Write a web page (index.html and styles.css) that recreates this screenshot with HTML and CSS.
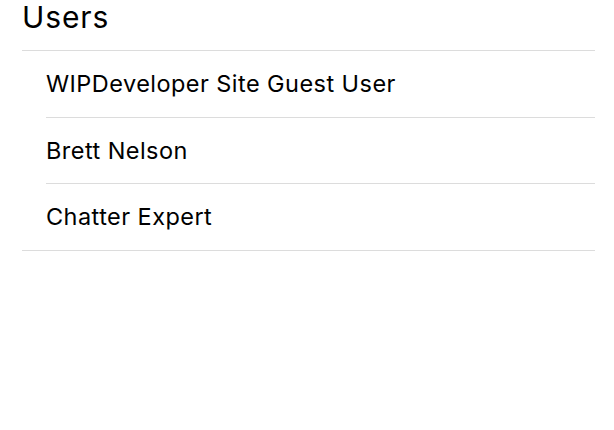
FILE: index.html
```html
<!DOCTYPE html>
<html lang="en">
<head>
<meta charset="utf-8">
<title>Users</title>
<link rel="stylesheet" href="styles.css">
</head>
<body>
<section class="users">
  <h1 class="users-title">Users</h1>
  <ul class="user-list">
    <li class="user-item"><span class="user-name">WIPDeveloper Site Guest User</span></li>
    <li class="user-item"><span class="user-name">Brett Nelson</span></li>
    <li class="user-item"><span class="user-name">Chatter Expert</span></li>
  </ul>
</section>
</body>
</html>
```
FILE: styles.css
```css
html, body {
  margin: 0;
  padding: 0;
  background: #ffffff;
}

body {
  font-family: Inter, "Noto Sans", "Liberation Sans", sans-serif;
  color: #000000;
}

.users {
  padding: 0 19px 0 22px;
}

.users-title {
  margin: 0;
  height: 50px;
  font-size: 30px;
  font-weight: 400;
  line-height: 34px;
  letter-spacing: 0.9px;
  border-bottom: 1px solid #dcdcdc;
  box-sizing: content-box;
}

.user-list {
  list-style: none;
  margin: 0;
  padding: 0;
  border-bottom: 1px solid #dcdcdc;
}

.user-item {
  margin-left: 24px;
}

.user-name {
  display: block;
  height: 65.6px;
  line-height: 65.6px;
  font-size: 23.5px;
  letter-spacing: 0.45px;
  border-bottom: 1px solid #dcdcdc;
}

.user-item:last-child .user-name {
  border-bottom: none;
}
```
